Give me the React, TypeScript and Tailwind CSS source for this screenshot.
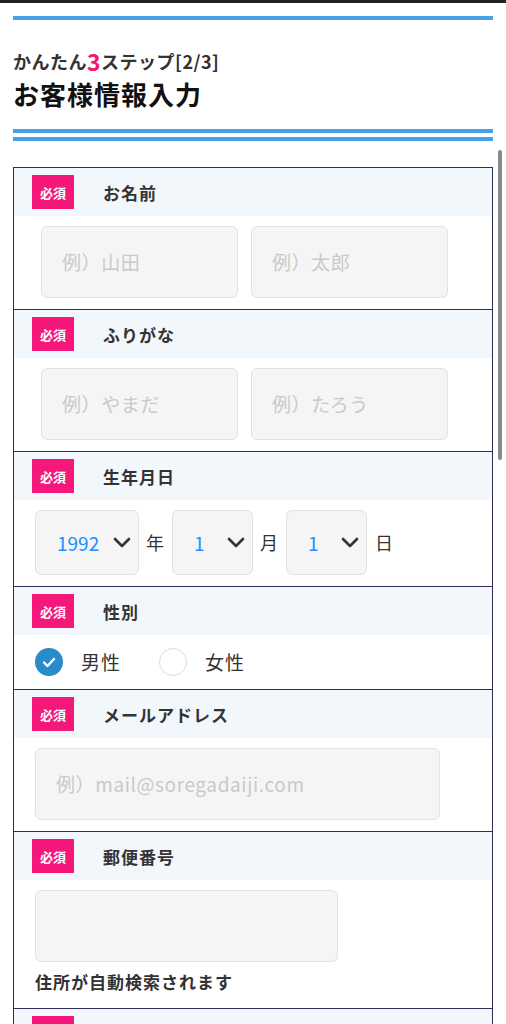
import React from "react";

const FONT = '"Noto Sans CJK JP", "Noto Sans", sans-serif';

function Header({ label }: { label: string }) {
  return (
    <div className="h-[48px] bg-[#f2f7fc] flex items-center pl-[18px]">
      <span className="w-[42px] h-[34px] bg-[#f5177a] text-white text-[13px] font-bold flex items-center justify-center leading-none">
        必須
      </span>
      <span className="ml-[29px] text-[17px] font-bold text-[#333] tracking-[1px] leading-none">
        {label}
      </span>
    </div>
  );
}

function TextBox({ w, placeholder }: { w: string; placeholder?: string }) {
  return (
    <div
      className={`${w} h-[72px] bg-[#f5f5f5] border border-[#e2e2e2] rounded-[6px] flex items-center pl-[20px] text-[19px] text-[#c9c9c9] tracking-[0.6px]`}
    >
      {placeholder}
    </div>
  );
}

function Chevron() {
  return (
    <svg width="18" height="11" viewBox="0 0 18 11" fill="none">
      <path d="M2 2 L9 9 L16 2" stroke="#333" strokeWidth="2.6" strokeLinecap="round" strokeLinejoin="round" />
    </svg>
  );
}

function Select({ w, value }: { w: string; value: string }) {
  return (
    <div
      className={`${w} h-[65px] bg-[#f5f5f5] border border-[#e2e2e2] rounded-[6px] flex items-center justify-between pl-[21px] pr-[7px]`}
    >
      <span className="text-[19px] text-[#1e8fff] leading-none">{value}</span>
      <Chevron />
    </div>
  );
}

export default function App() {
  return (
    <div className="relative w-full bg-white overflow-hidden" style={{ fontFamily: FONT }}>
      <div className="h-[3px] bg-[#222]" />
      <div className="px-[13px]">
        <div className="mt-[13px] h-[4px] bg-[#45a2e8]" />
        <div className="mt-[28px] h-[26px] flex items-end text-[18px] font-bold text-[#333] leading-[26px] tracking-[0.5px]">
          <span>かんたん</span>
          <span className="text-[23px] text-[#f5176f] leading-[26px]">3</span>
          <span>ステップ[2/3]</span>
        </div>
        <div className="mt-[3px] text-[26px] font-bold text-[#111] leading-[34px] tracking-[1px]">
          お客様情報入力
        </div>
        <div className="mt-[18px] h-[4px] bg-[#45a2e8]" />
        <div className="mt-[4px] h-[4px] bg-[#45a2e8]" />

        <div className="mt-[26px] border-x border-t border-[#302c5c]">
          {/* Name */}
          <div className="border-b border-[#302c5c]">
            <Header label="お名前" />
            <div className="pt-[10px] pb-[11px] pl-[27px] flex gap-[13px]">
              <TextBox w="w-[197px]" placeholder="例）山田" />
              <TextBox w="w-[197px]" placeholder="例）太郎" />
            </div>
          </div>
          {/* Furigana */}
          <div className="border-b border-[#302c5c]">
            <Header label="ふりがな" />
            <div className="pt-[10px] pb-[11px] pl-[27px] flex gap-[13px]">
              <TextBox w="w-[197px]" placeholder="例）やまだ" />
              <TextBox w="w-[197px]" placeholder="例）たろう" />
            </div>
          </div>
          {/* Birthday */}
          <div className="border-b border-[#302c5c]">
            <Header label="生年月日" />
            <div className="pt-[10px] pb-[11px] pl-[21px] flex items-center text-[18px] text-[#333]">
              <Select w="w-[104px]" value="1992" />
              <span className="ml-[7px] mr-[8px]">年</span>
              <Select w="w-[81px]" value="1" />
              <span className="ml-[7px] mr-[8px]">月</span>
              <Select w="w-[81px]" value="1" />
              <span className="ml-[8px]">日</span>
            </div>
          </div>
          {/* Gender */}
          <div className="border-b border-[#302c5c]">
            <Header label="性別" />
            <div className="h-[54px] pl-[21px] flex items-center text-[19px] text-[#333] tracking-[1px]">
              <span className="w-[28px] h-[28px] rounded-full bg-[#2a8bcb] flex items-center justify-center">
                <svg width="14" height="11" viewBox="0 0 14 11" fill="none">
                  <path d="M2 5.5 L5.5 9 L12 2" stroke="#fff" strokeWidth="2.4" strokeLinecap="round" strokeLinejoin="round" />
                </svg>
              </span>
              <span className="ml-[18px]">男性</span>
              <span className="ml-[38px] w-[28px] h-[28px] rounded-full bg-white border-[1.5px] border-[#dcdcdc]" />
              <span className="ml-[18px]">女性</span>
            </div>
          </div>
          {/* Email */}
          <div className="border-b border-[#302c5c]">
            <Header label="メールアドレス" />
            <div className="pt-[10px] pb-[11px] pl-[21px]">
              <TextBox w="w-[405px]" placeholder="例）mail@soregadaiji.com" />
            </div>
          </div>
          {/* Postal */}
          <div className="border-b border-[#302c5c]">
            <Header label="郵便番号" />
            <div className="pt-[10px] pb-[14px] pl-[21px]">
              <TextBox w="w-[303px]" />
              <div className="mt-[8px] text-[17px] font-bold text-[#333] tracking-[1px] leading-[24px]">
                住所が自動検索されます
              </div>
            </div>
          </div>
          {/* Next */}
          <div className="border-b border-[#302c5c]">
            <Header label="都道府県" />
            <div className="h-[90px]" />
          </div>
        </div>
      </div>
      <div className="absolute left-[498px] top-[150px] w-[4px] h-[310px] rounded-full bg-[#8a8a8a]" />
    </div>
  );
}
